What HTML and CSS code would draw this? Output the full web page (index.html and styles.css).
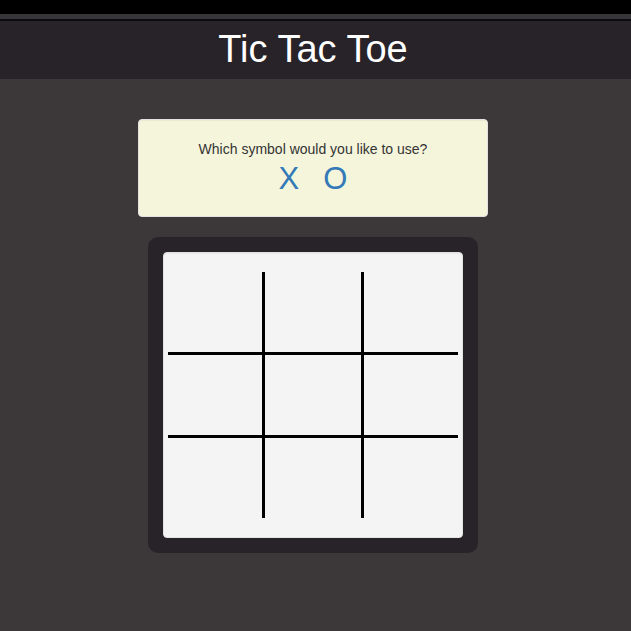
FILE: index.html
```html
<!DOCTYPE html>
<html lang="en">
<head>
<meta charset="utf-8">
<meta name="viewport" content="width=device-width, initial-scale=1">
<title>Tic Tac Toe</title>
<link rel="stylesheet" href="styles.css">
</head>
<body>
<header class="header">
  <div class="top-bar"></div>
  <h1 class="title">Tic Tac Toe</h1>
</header>
<main class="game">
  <section class="well chooser">
    <p class="question">Which symbol would you like to use?</p>
    <div class="symbols">
      <a class="symbol" href="#x">X</a>
      <a class="symbol" href="#o">O</a>
    </div>
  </section>
  <section class="frame">
    <div class="well board">
      <div class="grid">
        <button class="cell" type="button" aria-label="Top left"></button>
        <button class="cell" type="button" aria-label="Top middle"></button>
        <button class="cell" type="button" aria-label="Top right"></button>
        <button class="cell" type="button" aria-label="Middle left"></button>
        <button class="cell" type="button" aria-label="Center"></button>
        <button class="cell" type="button" aria-label="Middle right"></button>
        <button class="cell" type="button" aria-label="Bottom left"></button>
        <button class="cell" type="button" aria-label="Bottom middle"></button>
        <button class="cell" type="button" aria-label="Bottom right"></button>
      </div>
    </div>
  </section>
</main>
</body>
</html>
```
FILE: styles.css
```css
* {
  box-sizing: border-box;
}

body {
  margin: 0;
  background: #3c3738;
  color: #333;
  font-family: "Liberation Sans", Arial, sans-serif;
  font-size: 14px;
  line-height: 20px;
}

.header {
  background: #282328;
}

.top-bar {
  height: 21px;
  border-top: 14px solid #000;
  border-bottom: 2px solid #0c0b0d;
  background: #363638;
}

.title {
  margin: 0;
  padding: 6px 5px 8px 0;
  color: #fff;
  font-size: 38px;
  font-weight: 400;
  line-height: 44px;
  text-align: center;
}

.game {
  display: flex;
  flex-direction: column;
  align-items: center;
  gap: 20px;
  padding: 40px 5px 40px 0;
}

.well {
  border: 1px solid #e3e3e3;
  border-radius: 4px;
  box-shadow: inset 0 1px 1px rgba(0, 0, 0, 0.05);
}

.chooser {
  width: 100%;
  max-width: 350px;
  padding: 19px;
  background: #f5f5dc;
  text-align: center;
}

.question {
  margin: 0 0 2px;
}

.symbols {
  display: flex;
  justify-content: center;
  gap: 24px;
}

.symbol {
  color: #337ab7;
  font-size: 31px;
  line-height: 36px;
  text-decoration: none;
}

.frame {
  width: 100%;
  max-width: 330px;
  padding: 15px;
  border-radius: 10px;
  background: #282328;
}

.board {
  padding: 19px 4px;
  background: #f4f4f4;
}

.grid {
  display: grid;
  grid-template-columns: 94fr 96fr 94fr;
  grid-auto-rows: 80px;
  gap: 3px;
  background: #000;
}

.cell {
  padding: 0;
  border: 0;
  background: #f4f4f4;
  cursor: pointer;
}
```
